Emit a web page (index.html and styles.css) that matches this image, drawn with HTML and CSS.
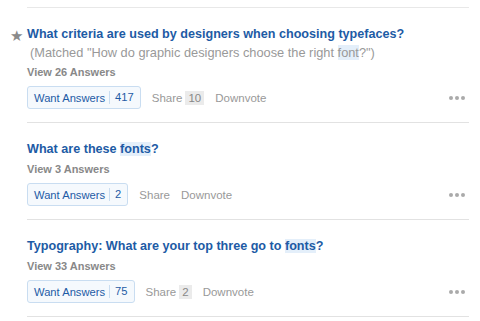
FILE: index.html
```html
<!DOCTYPE html>
<html lang="en">
<head>
    <meta charset="UTF-8">
    <meta name="viewport" content="width=device-width, initial-scale=1.0">
    <title>Related Questions</title>
    <link rel="stylesheet" href="styles.css">
</head>
<body>

    <div class="feed">
        <div class="item">
            <div class="title">
                <span class="star">&#9733;</span>
                <a href="#">What criteria are used by designers when choosing typefaces?</a>
            </div>
            <div class="matched">(Matched "How do graphic designers choose the right <span class="hl">font</span>?")</div>
            <div class="view">View 26 Answers</div>
            <div class="actions">
                <span class="want">Want Answers<span class="count">417</span></span>
                <span class="share">Share<span class="badge">10</span></span>
                <span class="down">Downvote</span>
                <span class="more"><i></i><i></i><i></i></span>
            </div>
        </div>

        <div class="item">
            <div class="title">
                <a href="#">What are these <span class="hl">fonts</span>?</a>
            </div>
            <div class="view">View 3 Answers</div>
            <div class="actions">
                <span class="want">Want Answers<span class="count">2</span></span>
                <span class="share">Share</span>
                <span class="down">Downvote</span>
                <span class="more"><i></i><i></i><i></i></span>
            </div>
        </div>

        <div class="item">
            <div class="title">
                <a href="#">Typography: What are your top three go to <span class="hl">fonts</span>?</a>
            </div>
            <div class="view">View 33 Answers</div>
            <div class="actions">
                <span class="want">Want Answers<span class="count">75</span></span>
                <span class="share">Share<span class="badge">2</span></span>
                <span class="down">Downvote</span>
                <span class="more"><i></i><i></i><i></i></span>
            </div>
        </div>
    </div>

</body>
</html>
```

FILE: styles.css
```css
body {
    margin: 0;
    background-color: #fff;
    font-family: "Liberation Sans", Arial, sans-serif;
    color: #333;
}

.feed {
    margin: 7px 11px 0 27px;
    border-top: 1px solid #e8e8e8;
}

.item {
    padding: 18px 0 13px 0;
    border-bottom: 1px solid #e2e2e2;
}

.title {
    position: relative;
    font-size: 12.6px;
    line-height: 17px;
    font-weight: bold;
}

.title a {
    color: #1d5ba5;
    text-decoration: none;
}

.star {
    position: absolute;
    left: -17px;
    top: 1px;
    font-size: 15px;
    line-height: 17px;
    font-weight: normal;
    color: #8a8a8a;
}

.hl {
    background-color: #e4effa;
}

.matched {
    margin-top: 1px;
    margin-left: 3px;
    font-size: 12.8px;
    line-height: 17px;
    color: #999;
}

.view {
    margin-top: 3px;
    font-size: 11px;
    line-height: 16px;
    font-weight: bold;
    color: #888;
}

.actions {
    display: flex;
    align-items: center;
    margin-top: 6px;
    font-size: 11.5px;
    color: #999;
}

.want {
    display: flex;
    align-items: center;
    height: 21px;
    padding: 0 6px;
    border: 1px solid #c9ddf1;
    border-radius: 3px;
    background-color: #f5f9fd;
    font-size: 11.2px;
    color: #1d5ba5;
}

.count {
    margin-left: 4px;
    padding-left: 5px;
    border-left: 1px solid #c9ddf1;
    line-height: 13px;
}

.share {
    display: flex;
    align-items: center;
    margin-left: 11px;
}

.badge {
    margin-left: 3px;
    padding: 0 3px;
    line-height: 14px;
    background-color: #ebebeb;
    color: #888;
}

.down {
    margin-left: 11px;
}

.more {
    display: flex;
    gap: 2px;
    margin-left: auto;
    margin-right: 4px;
}

.more i {
    width: 4px;
    height: 4px;
    border-radius: 50%;
    background-color: #aaa;
}
```
